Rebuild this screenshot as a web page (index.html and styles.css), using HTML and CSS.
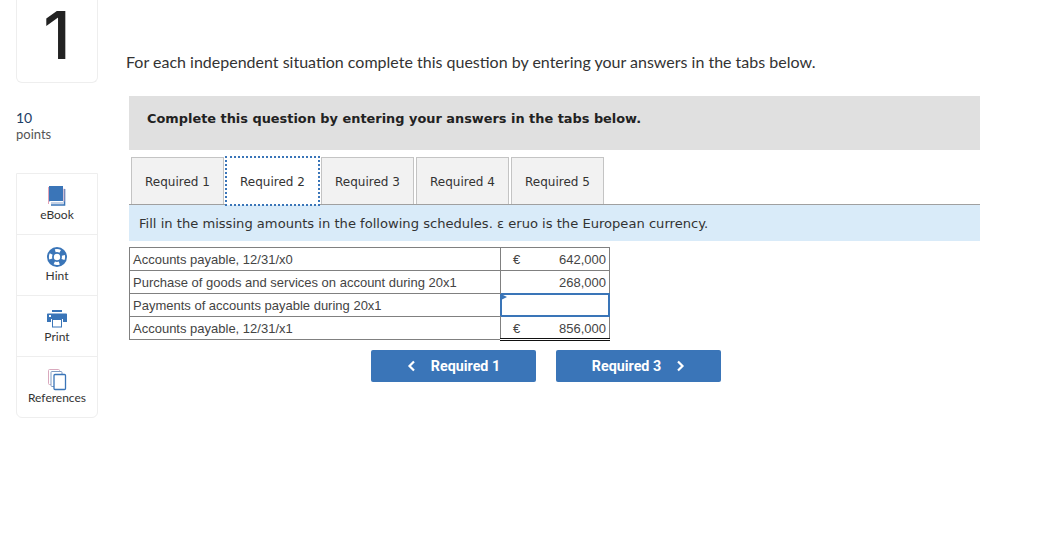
FILE: index.html
```html
<!DOCTYPE html>
<html lang="en">
<head>
<meta charset="utf-8">
<title>Question 1</title>
<link rel="stylesheet" href="styles.css">
</head>
<body>
<div class="page">
  <aside class="side">
    <div class="num-card"><span class="num">1</span></div>
    <div class="points"><div class="pts-n">10</div><div class="pts-l">points</div></div>
    <nav class="tools">
      <div class="tool">
        <svg class="ico" width="22" height="22" viewBox="0 0 22 22"><path d="M2.500 18V1" stroke="#e3a3b8" stroke-width="1"/><path d="M3 0h14v15H5c-1 0-2 .4-2 1z" fill="#3a75b8"/><path d="M18.500 3v16H5" fill="none" stroke="#3a75b8" stroke-width="1.600"/><path d="M18 2.500v13" stroke="#e3a3b8" stroke-width=".8"/><path d="M5 17h12" stroke="#9fb4d6" stroke-width="1.200"/></svg>
        <span>eBook</span>
      </div>
      <div class="tool">
        <svg class="ico" width="22" height="22" viewBox="0 0 22 22"><circle cx="11" cy="10" r="10" fill="#3a75b8"/><circle cx="11" cy="10" r="3.200" fill="#fff"/><circle cx="11" cy="10" r="6.500" fill="none" stroke="#fff" stroke-width="3.200" stroke-dasharray="5.200 5" stroke-dashoffset="2.600"/></svg>
        <span>Hint</span>
      </div>
      <div class="tool">
        <svg class="ico" width="22" height="22" viewBox="0 0 22 22"><rect x="6" y="2" width="10" height="2" fill="#3a75b8"/><path d="M2 5.500h18c.6 0 1 .4 1 1V14h-4v-3H5v3H1V6.500c0-.6.4-1 1-1z" fill="#3a75b8"/><rect x="3" y="7" width="2" height="2" fill="#fff"/><rect x="6.500" y="11.500" width="9" height="7.500" fill="#fff" stroke="#3a75b8"/></svg>
        <span>Print</span>
      </div>
      <div class="tool">
        <svg class="ico" width="22" height="22" viewBox="0 0 22 22"><rect x="2.500" y=".5" width="11" height="15" rx="1" fill="#fff" stroke="#d9a9bd"/><rect x="5" y="2.500" width="11" height="15" rx="1" fill="#fff" stroke="#7f9cc4"/><rect x="8" y="5.500" width="11.500" height="15" rx="1" fill="#fff" stroke="#3a75b8" stroke-width="1.300"/></svg>
        <span>References</span>
      </div>
    </nav>
  </aside>
  <main class="main">
    <p class="intro">For each independent situation complete this question by entering your answers in the tabs below.</p>
    <div class="panel">
      <div class="banner">Complete this question by entering your answers in the tabs below.</div>
      <div class="tabs">
        <div class="tab">Required 1</div>
        <div class="tab active">Required 2</div>
        <div class="tab">Required 3</div>
        <div class="tab">Required 4</div>
        <div class="tab">Required 5</div>
      </div>
      <div class="note">Fill in the missing amounts in the following schedules. ε eruo is the European currency.</div>
      <table class="sched">
        <tr><td class="lbl">Accounts payable, 12/31/x0</td><td class="amt"><span>€</span><span>642,000</span></td></tr>
        <tr><td class="lbl">Purchase of goods and services on account during 20x1</td><td class="amt above-input"><span></span><span>268,000</span></td></tr>
        <tr><td class="lbl before-input">Payments of accounts payable during 20x1</td><td class="amt input"><i class="flag"></i></td></tr>
        <tr><td class="lbl">Accounts payable, 12/31/x1</td><td class="amt total"><span>€</span><span>856,000</span></td></tr>
      </table>
      <div class="nav">
        <button class="btn"><svg width="9" height="12" viewBox="0 0 9 12"><path d="M7 1.500 2.500 6 7 10.500" fill="none" stroke="#fff" stroke-width="2.200"/></svg><span>Required 1</span></button>
        <button class="btn"><span>Required 3</span><svg width="9" height="12" viewBox="0 0 9 12"><path d="M2 1.500 6.500 6 2 10.500" fill="none" stroke="#fff" stroke-width="2.200"/></svg></button>
      </div>
    </div>
  </main>
</div>
</body>
</html>
```
FILE: styles.css
```css
* { box-sizing: border-box; }
html, body { margin: 0; background: #fff; }
body { height: 553px; overflow: hidden; font-family: "Lato", "Liberation Sans", sans-serif; color: #333; }
.page { display: flex; padding-left: 16px; }

.side { width: 82px; flex: none; }
.num-card {
  height: 83px; padding-top: 3px;
  border: 1px solid #eee; border-top: 0; border-radius: 0 0 6px 6px;
  display: flex; justify-content: center; align-items: flex-start;
}
.num { font: 500 66px/64px "Inter", "Lato", sans-serif; color: #222; }
.points { margin-top: 27px; height: 63px; }
.pts-n { font-size: 14px; line-height: 16px; color: #1c3e66; }
.pts-l { font-size: 13px; line-height: 16px; color: #555; }
.tools { border: 1px solid #eee; border-radius: 0 0 6px 6px; }
.tool {
  height: 61px; display: flex; flex-direction: column; align-items: center;
  padding-top: 12px; border-bottom: 1px solid #eee;
  font-size: 12px; line-height: 14px; color: #333;
}
.tool:last-child { border-bottom: 0; height: 60px; }
.ico { display: block; }

.main { margin-left: 28px; width: 854px; }
.intro { margin: 53px 0 0; font-size: 16px; line-height: 18px; color: #333; }
.panel { margin-left: 3px; margin-top: 25px; width: 851px; }
.banner {
  height: 54px; background: #e0e0e0; padding: 14px 18px 0;
  font: 700 12.900px/17px "DejaVu Sans", sans-serif; color: #222;
}
.tabs { display: flex; gap: 2px; margin-top: 7px; padding-left: 2px; border-bottom: 1px solid #a0a0a0; height: 48px; }
.tab {
  width: 93px; height: 47px; background: #f2f2f2; border: 1px solid #c4c4c4; border-bottom: 0;
  font: 12px/49px "DejaVu Sans", sans-serif; text-align: center; color: #333;
}
.tab.active { background: #fff; border: 0; outline: 2px dotted #3a75b8; outline-offset: -1px; height: 48px; position: relative; line-height: 51px; }
.note {
  height: 36px; background: #d9ebf9; padding: 0 10px;
  font: 13.100px/38px "DejaVu Sans", sans-serif; color: #333;
}
.sched { border-collapse: collapse; margin-top: 6px; width: 480px; table-layout: fixed; font: 13px "Liberation Sans", sans-serif; color: #444; }
.sched td { height: 23px; border: 1px solid #808080; padding: 1px 3px 0; }
.sched .lbl { width: 371px; }
.amt { width: 109px; }
.sched td.amt { padding-left: 12px; }
.sched tr td.amt span:first-child { float: left; }
.sched tr td.amt span:last-child { float: right; }
.sched td.before-input { border-right-color: #3a75b8; }
.sched td.above-input { border-bottom-color: #3a75b8; }
.sched td.input { border-color: #3a75b8; box-shadow: inset 0 0 0 1px #3a75b8; position: relative; padding: 0; }
.flag { position: absolute; left: 0; top: 0; border-left: 6px solid #3a75b8; border-top: 3px solid transparent; border-bottom: 3px solid transparent; }
.sched td.total { border-bottom: 3px double #111; }
.nav { display: flex; gap: 20px; margin: 9px 0 0 242px; }
.btn {
  width: 165px; height: 32px; background: #3a75b8; border: 0; border-radius: 2px;
  color: #fff; font: 700 14.300px "Roboto", sans-serif;
  display: flex; align-items: center; justify-content: center; gap: 15px; padding: 0;
}
```
